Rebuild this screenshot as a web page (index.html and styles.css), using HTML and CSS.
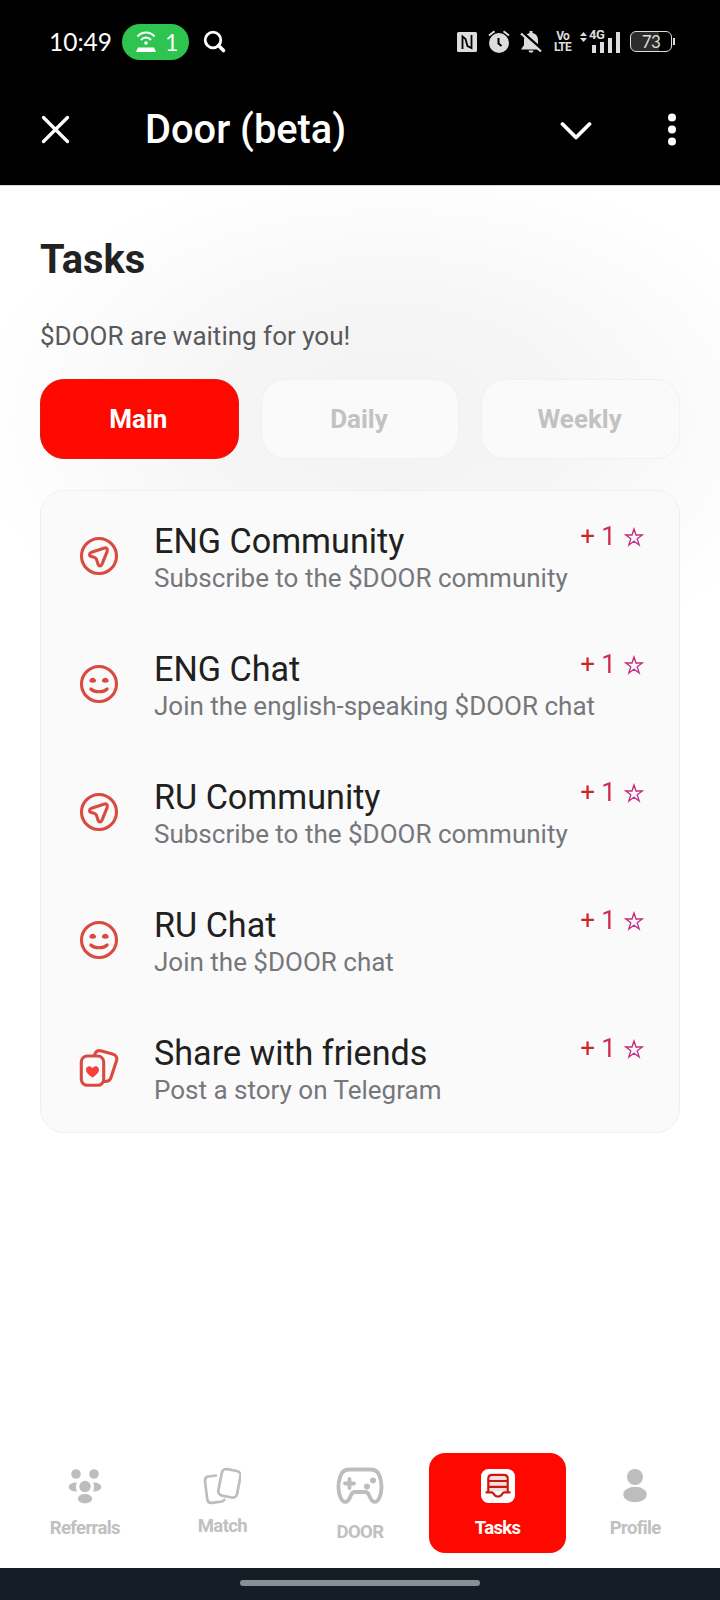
FILE: index.html
```html
<!DOCTYPE html>
<html lang="en">
<head>
<meta charset="utf-8">
<title>Door (beta)</title>
<link rel="stylesheet" href="styles.css">
</head>
<body>
<svg width="0" height="0" class="defs">
  <defs>
    <symbol id="plane" viewBox="0 0 40 40"><circle cx="20" cy="20" r="17.500"/><path d="M25.500 12 12.500 16.300c-2.600 1-2.600 3.300-.1 4.100l3 1c1.100.4 1.800 1.100 2.200 2.200l1.400 4.400c.8 2.600 3 2.700 4 .2l5-12.300c.9-2.600-.1-4.500-2.500-3.900z"/></symbol>
    <symbol id="smile" viewBox="0 0 40 40"><circle cx="20" cy="20" r="17.500"/><path d="M11.800 25c4 3.700 12.400 3.700 16.400 0"/><path class="solid" d="M10.300 17.300c0-4.800 6.800-4.800 6.800 0 0 1.800-6.800 1.800-6.800 0zM22.900 17.300c0-4.800 6.800-4.800 6.800 0 0 1.800-6.800 1.800-6.800 0z"/></symbol>
    <symbol id="cards" viewBox="0 0 40 40"><rect x="2.300" y="8" width="22.400" height="29.300" rx="6"/><path d="M15.500 7c1.300-3.700 3.500-5 7-4l11 3c3.400 1 5 3.400 4 6.800L32 29.500c-.9 3-3 4.200-6.500 4"/><path class="heart" d="M13.500 29.500c-4.300-2.700-6.500-5.200-6.500-7.700 0-4 4.800-4.800 6.500-1.500 1.700-3.300 6.500-2.500 6.500 1.500 0 2.500-2.200 5-6.500 7.700z"/></symbol>
    <linearGradient id="starFill" x1="0" y1="0" x2="1" y2="1"><stop offset="0" stop-color="#c42858"/><stop offset="1" stop-color="#bd2fa4"/></linearGradient>
    <symbol id="star" viewBox="0 0 20 20"><path d="M10 2l2 6h6.300l-5.100 3.800 2 6.200L10 14.200 4.800 18l2-6.200L1.700 8H8z" fill="none" stroke="url(#starFill)" stroke-width="1.300" stroke-linejoin="miter"/></symbol>
  </defs>
</svg>

<header class="top">
  <div class="status">
    <span class="clock">10:49</span>
    <span class="hotspot">
      <svg width="22" height="24" viewBox="0 0 22 24" fill="none" stroke="#fff" stroke-width="2"><path d="M2.500 6.500C7 1 15 1 19.500 6.500M6 10c3-3.500 7-3.500 10 0"/><circle cx="11" cy="13" r="1.800" fill="#fff" stroke="none"/><path d="M3 17.500h16l2 4.500H1z" fill="#fff" stroke="none"/></svg>
      <span>1</span>
    </span>
    <svg class="search" width="24" height="24" viewBox="0 0 24 24" fill="none" stroke="#fff" stroke-width="2.800"><circle cx="10" cy="10" r="7.800"/><path d="M15.500 15.500l5 5" stroke-width="3.600" stroke-linecap="round"/></svg>
    <div class="system">
      <svg width="20" height="20" viewBox="0 0 20 20"><rect width="20" height="20" rx="1.500" fill="#ddd"/><path d="M5.500 17V4.500l3 2.500 2 7 4 2V3" fill="none" stroke="#000" stroke-width="1.800"/></svg>
      <svg class="alarm" width="22" height="24" viewBox="0 0 22 24"><circle cx="11" cy="13" r="10" fill="#ddd"/><path d="M1 5.500 6.500 1.200M21 5.500l-5.500-4.300" stroke="#ddd" stroke-width="2"/><path d="M10.500 8v5.500l3 2.500" fill="none" stroke="#000" stroke-width="2"/></svg>
      <svg class="bell" width="22" height="24" viewBox="0 0 22 24"><path d="M9.500 1h3v2c4 1 5.500 4 5.500 7v5l3 4.500H1L4 15v-5c0-3.500 2-6 5.500-7zM8.500 20.500h5c-.5 3-4.500 3-5 0z" fill="#ddd"/><path d="M2.500 2.200 22 19.500" stroke="#000" stroke-width="2.500"/><path d="M1 3.500l20 18" stroke="#ddd" stroke-width="2.200"/></svg>
      <span class="volte"><span>Vo</span><span>LTE</span></span>
      <span class="signal">
        <svg width="40" height="22" viewBox="0 0 40 22" fill="#ddd"><path d="M0 5 3.500 1 7 5zM0 7h7l-3.500 4zM12 14h4v8h-4zM20 11h4v11h-4zM28 7h4v15h-4zM36 1h4v21h-4z"/></svg>
        <span class="net">4G</span>
      </span>
      <span class="battery">73</span>
    </div>
  </div>
  <div class="appbar">
    <svg class="close" width="30" height="30" viewBox="0 0 30 30" fill="none" stroke="#fff" stroke-width="3.300" stroke-linecap="round"><path d="M3.500 2.500l24 24M27.500 2.500l-24 24"/></svg>
    <span class="name">Door (beta)</span>
    <svg class="chevron" width="32" height="20" viewBox="0 0 32 20" fill="none" stroke="#fff" stroke-width="3.800" stroke-linecap="round" stroke-linejoin="round"><path d="M2.500 4 16 17.500 29.500 4"/></svg>
    <svg class="more" width="8" height="34" viewBox="0 0 8 34" fill="#fff"><circle cx="4" cy="4.500" r="4"/><circle cx="4" cy="16.500" r="4"/><circle cx="4" cy="28.500" r="4"/></svg>
  </div>
</header>

<main class="page">
  <h1 class="heading">Tasks</h1>
  <p class="lead">$DOOR are waiting for you!</p>
  <div class="tabs">
    <button class="tab tab-active">Main</button>
    <button class="tab">Daily</button>
    <button class="tab">Weekly</button>
  </div>
  <ul class="tasks">
    <li class="task"><svg class="task-icon"><use href="#plane"/></svg><div class="task-text"><div class="task-title">ENG Community</div><div class="task-desc">Subscribe to the $DOOR community</div></div><div class="reward"><span>+ 1</span><svg class="star"><use href="#star"/></svg></div></li>
    <li class="task"><svg class="task-icon"><use href="#smile"/></svg><div class="task-text"><div class="task-title">ENG Chat</div><div class="task-desc">Join the english-speaking $DOOR chat</div></div><div class="reward"><span>+ 1</span><svg class="star"><use href="#star"/></svg></div></li>
    <li class="task"><svg class="task-icon"><use href="#plane"/></svg><div class="task-text"><div class="task-title">RU Community</div><div class="task-desc">Subscribe to the $DOOR community</div></div><div class="reward"><span>+ 1</span><svg class="star"><use href="#star"/></svg></div></li>
    <li class="task"><svg class="task-icon"><use href="#smile"/></svg><div class="task-text"><div class="task-title">RU Chat</div><div class="task-desc">Join the $DOOR chat</div></div><div class="reward"><span>+ 1</span><svg class="star"><use href="#star"/></svg></div></li>
    <li class="task"><svg class="task-icon"><use href="#cards"/></svg><div class="task-text"><div class="task-title">Share with friends</div><div class="task-desc">Post a story on Telegram</div></div><div class="reward"><span>+ 1</span><svg class="star"><use href="#star"/></svg></div></li>
  </ul>
</main>

<nav class="nav">
  <a class="nav-item"><svg width="34" height="36" viewBox="0 0 34 36" fill="#bdbdbd"><circle cx="8" cy="6" r="4.800"/><circle cx="26" cy="6" r="4.800"/><circle cx="17" cy="18.500" r="5.700"/><ellipse cx="17" cy="30.800" rx="7.200" ry="4.700"/><path d="M8.800 14.400a13 13 0 0 0 0 9C-2 23.500-2 14.300 8.800 14.400zM25.200 14.400a13 13 0 0 1 0 9c10.800.1 10.800-9.100 0-9z"/></svg><span class="nav-label">Referrals</span></a>
  <a class="nav-item nav-match"><svg width="38" height="38" viewBox="0 0 38 38" fill="none" stroke="#bdbdbd" stroke-width="2.700" stroke-linecap="round"><rect x="17" y="2.800" width="19" height="27" rx="4.500" transform="rotate(11 26.500 16)"/><path d="M13 8.500 5.500 9.500C3 9.800 1.800 11.500 2 14l2.200 18c.4 3 2 4.200 4.600 3.900l10-1.400c1.200-.2 2-.8 2.600-1.700"/></svg><span class="nav-label">Match</span></a>
  <a class="nav-item nav-door"><svg width="50" height="40" viewBox="0 0 50 40" fill="none" stroke="#bdbdbd" stroke-width="3.800"><path d="M14 3.500h22c4.500 0 7.500 2.500 9 7.500 2.300 8 2 15.500-1 21.500-2.200 4.500-6 4.500-8.200.3l-2.300-4.600c-.8-1.500-1.800-2.200-3.500-2.200H20c-1.700 0-2.700.7-3.500 2.200l-2.300 4.600c-2.200 4.200-6 4.200-8.200-.3-3-6-3.300-13.500-1-21.500 1.500-5 4.500-7.500 9-7.500z"/><path d="M14.500 13v9M10 17.500h9" stroke-linecap="round"/><path d="M38 14.500v.1M32 20.500v.1" stroke-width="6" stroke-linecap="round"/></svg><span class="nav-label">DOOR</span></a>
  <a class="nav-item nav-active"><svg width="34" height="36" viewBox="0 0 34 36"><rect y="1" width="34" height="34" rx="7.500" fill="#fff"/><path d="M8.500 8h17l.5 4H8zM8 14h18v4H8zM8 20h18v3H8z" fill="#f3dfe0"/><path d="M7.300 24V10.500c0-2.800 1.200-3.700 4-3.700h11.400c2.800 0 4 .9 4 3.700V24M4.500 24.400h6.200c1.300 0 1.600.8 2.300 2 1.800 3 6.200 3 8 0 .7-1.200 1-2 2.300-2h6.200M8 13h18M8 18.800h18" fill="none" stroke="#cf1712" stroke-width="2.200"/></svg><span class="nav-label">Tasks</span></a>
  <a class="nav-item"><svg width="34" height="36" viewBox="0 0 34 36" fill="#bdbdbd"><circle cx="17" cy="9" r="8"/><ellipse cx="17" cy="26.500" rx="11.700" ry="7.700"/></svg><span class="nav-label">Profile</span></a>
</nav>
<footer class="gesture"><div class="pill"></div></footer>
</body>
</html>
```

FILE: styles.css
```css
* { box-sizing: border-box; }
body {
  margin: 0;
  width: 720px;
  height: 1600px;
  display: flex;
  flex-direction: column;
  font-family: Roboto, "Liberation Sans", sans-serif;
  background: #fff;
  overflow: hidden;
}
svg { flex: none; display: block; }
.defs { position: absolute; }

.top { background: #000; color: #fff; height: 185px; flex: none; }
.status { height: 83px; display: flex; align-items: center; padding: 0 48px 0 49px; }
.clock { font: 24.500px/30px Lato, sans-serif; width: 73px; }
.hotspot {
  width: 67px;
  height: 36px;
  border-radius: 18px;
  background: #2dc44f;
  display: flex;
  align-items: center;
  padding-left: 13px;
  gap: 8px;
  font: 23px/30px Lato, sans-serif;
}
.search { margin-left: 14px; }
.system { margin-left: auto; display: flex; align-items: center; color: #ddd; }
.alarm { margin-left: 11px; }
.bell { margin-left: 10px; }
.volte {
  margin-left: 12px;
  width: 17px;
  display: flex;
  flex-direction: column;
  align-items: center;
  font: 700 12px/11px Roboto, sans-serif;
  letter-spacing: -0.800px;
}
.signal { position: relative; margin-left: 9px; }
.net { position: absolute; left: 9px; top: -2px; font: 700 13px/12px Roboto, sans-serif; background: #000; letter-spacing: -0.500px; }
.battery {
  position: relative;
  margin-left: 10px;
  width: 42px;
  height: 21px;
  border: 1.500px solid #ddd;
  border-radius: 6px;
  text-align: center;
  font: 17px/19px Lato, sans-serif;
  letter-spacing: -0.500px;
  background: linear-gradient(90deg, #2c2c2c 70%, #000 70%);
}
.battery::after { content: ""; position: absolute; right: -4px; top: 6px; width: 2px; height: 7px; background: #ddd; }

.appbar { height: 93px; display: flex; align-items: center; padding: 0 44px 0 40px; }
.name { margin-left: 75px; font-size: 39.800px; font-weight: 500; line-height: 54px; }
.chevron { margin-left: auto; }
.more { margin-left: 76px; }

.page {
  flex: 1;
  padding: 51px 40px 0;
  border-top: 1px solid #d8d8d8;
  background: radial-gradient(ellipse 420px 260px at 390px 235px, #f3f3f3 0%, #f5f5f5 40%, #fafafa 70%, #fff 100%) no-repeat;
}
.heading { margin: 0; font-size: 39.800px; line-height: 46px; font-weight: 700; color: #222; }
.lead { margin: 38px 0 0; font-size: 26px; line-height: 30px; color: #58595b; }
.tabs { margin-top: 28px; display: grid; grid-template-columns: repeat(3, 1fr); gap: 22px; }
.tab {
  height: 80px;
  border: 1px solid #f1f1f1;
  border-radius: 24px;
  background: #fafafa;
  color: #c2c2c2;
  font: 700 26px/30px Roboto, sans-serif;
  padding: 0 2px 0 0;
}
.tab-active { background: #ff0800; border-color: #e51a10; color: #fff; }

.tasks {
  margin: 31px 0 0;
  padding: 0 0 1px;
  list-style: none;
  border: 1px solid #f0f0f0;
  border-radius: 24px;
  background: #fafafa;
}
.task { height: 128px; display: flex; padding: 30px 35px 0 38px; }
.task-icon { flex: none; width: 40px; height: 40px; margin-top: 15px; fill: none; stroke: #d94a41; stroke-width: 3.100; stroke-linecap: round; stroke-linejoin: round; }
.solid { fill: #d94a41; stroke: none; }
.heart { fill: #f83d3d; stroke: none; }
.task-text { margin-left: 35px; flex: 1; min-width: 0; white-space: nowrap; }
.task-title { font-size: 34.150px; line-height: 40px; color: #202020; }
.task-desc { font-size: 26px; line-height: 34px; color: #75777a; }
.reward { flex: none; display: flex; height: 30px; align-items: center; gap: 8px; font-size: 26px; line-height: 30px; white-space: nowrap; }
.reward span { background: linear-gradient(90deg, #cc2416, #cf285f); -webkit-background-clip: text; background-clip: text; color: transparent; }
.star { width: 20px; height: 20px; margin-top: 2px; }

.nav { flex: none; height: 115px; display: grid; grid-template-columns: repeat(5, 1fr); padding: 0 16px; }
.nav-item { height: 100px; border-radius: 16px; display: flex; flex-direction: column; align-items: center; padding-top: 15px; color: #c0c0c0; }
.nav-label { font-size: 18.500px; line-height: 22px; font-weight: 700; margin-top: 13px; letter-spacing: -0.650px; }
.nav-match { padding-top: 14px; }
.nav-match .nav-label { margin-top: 10px; }
.nav-door { padding-top: 13px; }
.nav-door .nav-label { margin-top: 15px; }
.nav-active { background: #ff0800; color: #fff; }
.gesture { flex: none; height: 32px; background: #151e26; display: flex; justify-content: center; padding-top: 12px; }
.pill { width: 240px; height: 6px; border-radius: 3px; background: #889096; }
```
